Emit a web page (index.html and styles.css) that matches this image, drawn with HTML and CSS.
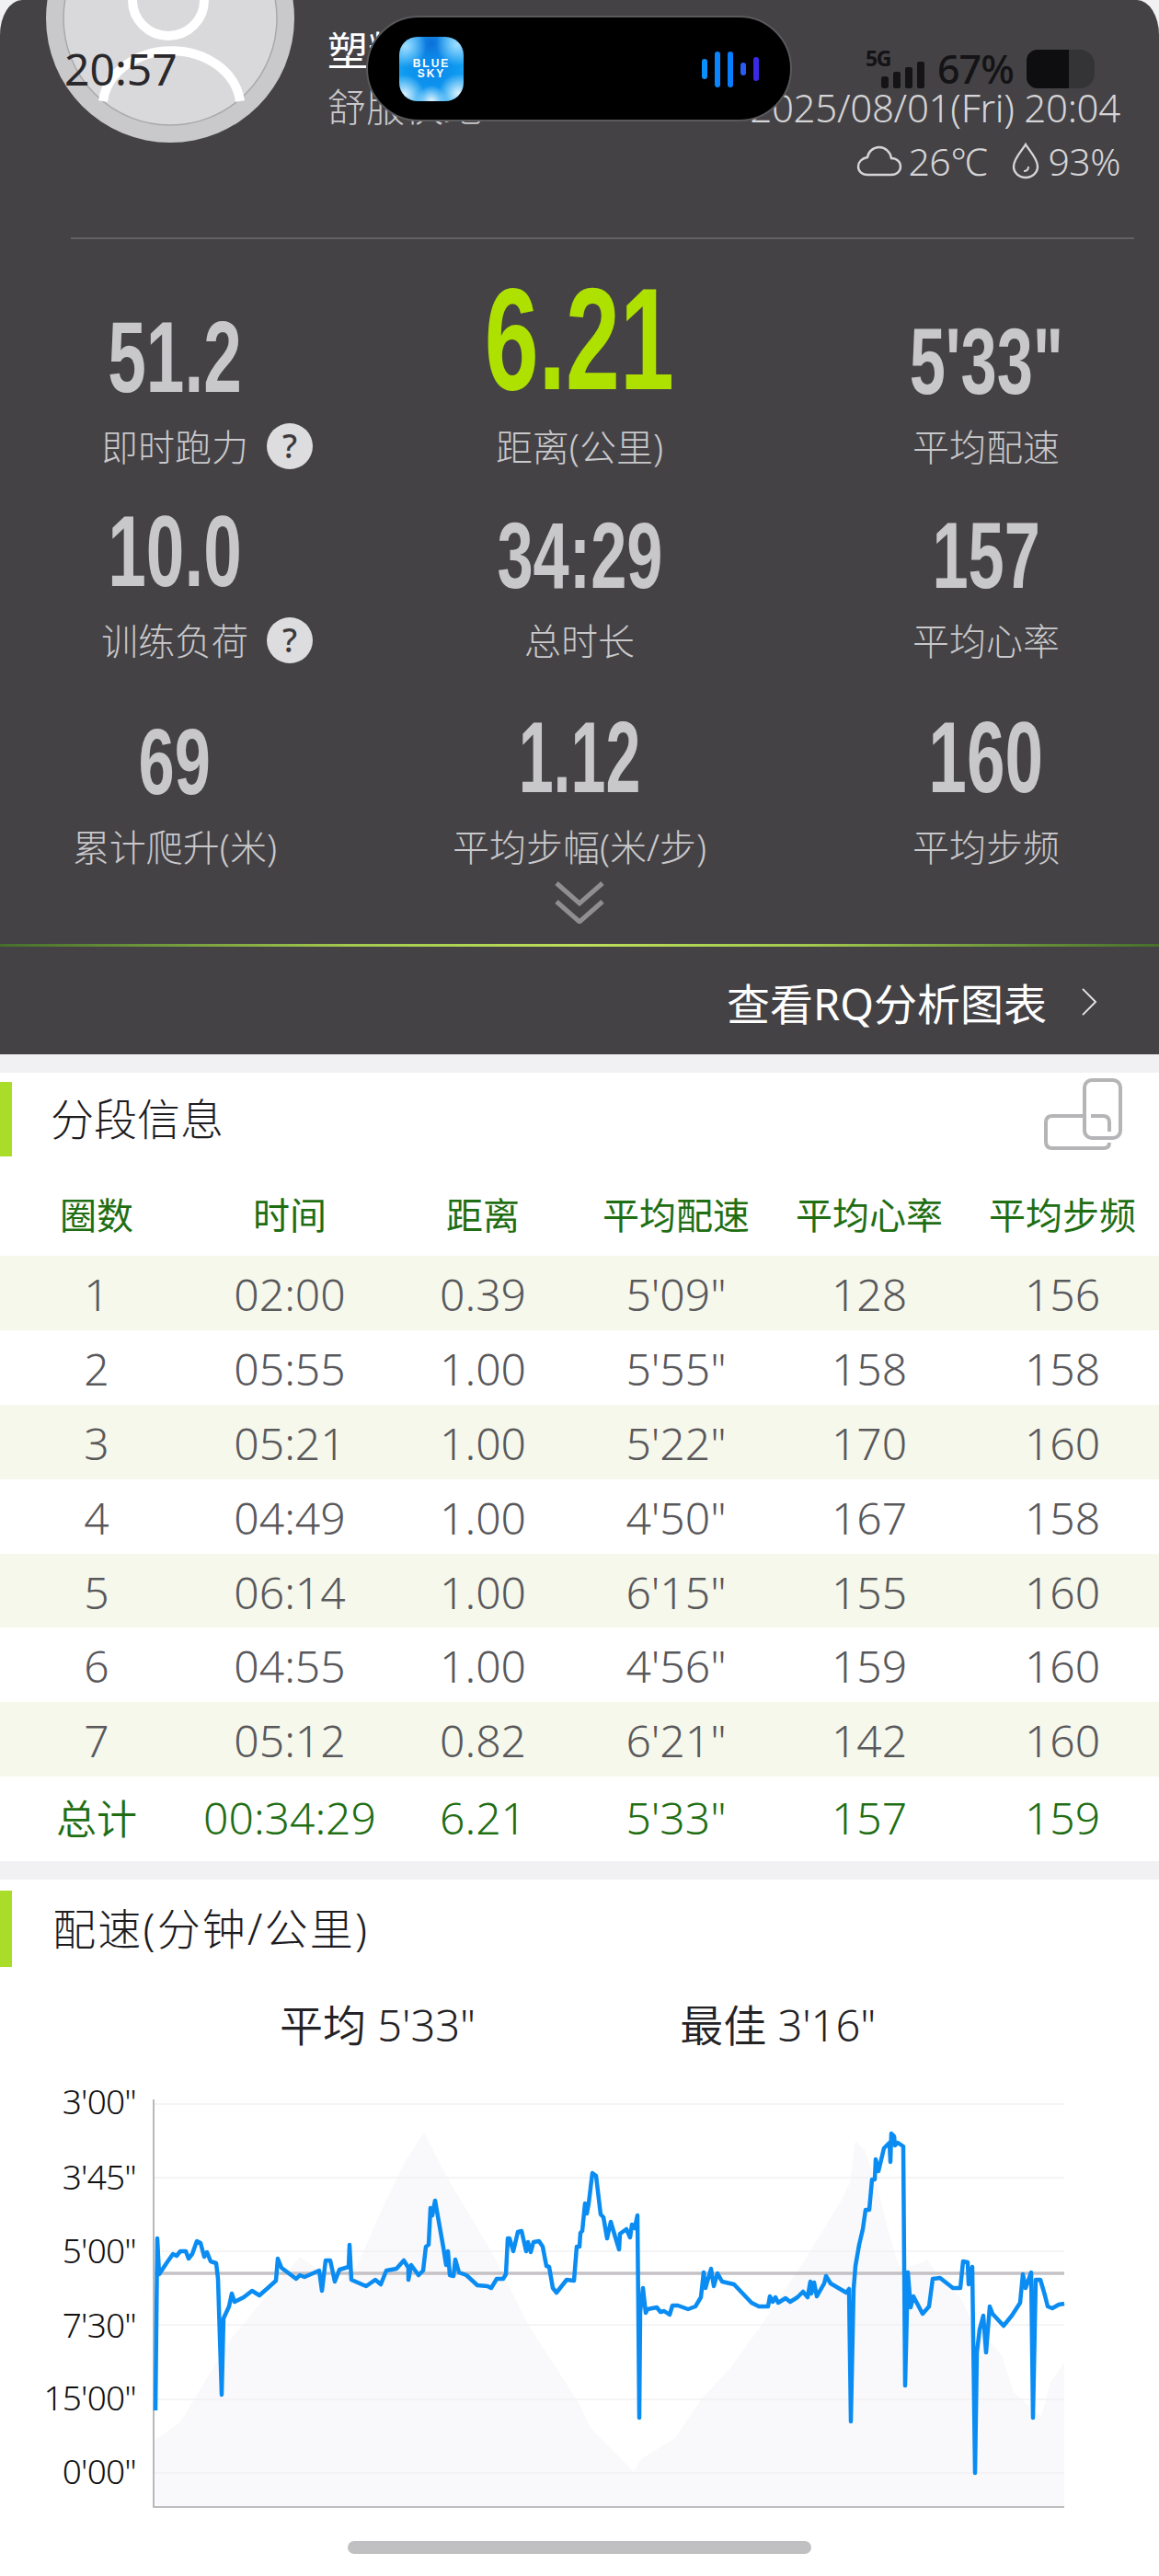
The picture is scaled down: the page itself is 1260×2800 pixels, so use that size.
FILE: index.html
```html
<!DOCTYPE html>
<html lang="zh">
<head>
<meta charset="utf-8">
<title>跑步详情</title>
<link rel="stylesheet" href="styles.css">
</head>
<body>
<div class="screen">
  <header class="panel">
    <div class="top">
      <svg class="avatar" viewBox="0 0 270 270">
        <circle cx="135" cy="135" r="135" fill="#c9c8cb"/>
        <circle cx="135" cy="135" r="116" fill="#d9d8db" stroke="#a9a8ab" stroke-width="1.5"/>
        <circle cx="133" cy="115" r="39" fill="none" stroke="#fff" stroke-width="10"/>
        <path d="M62 225 A75 62 0 0 1 211 225" fill="none" stroke="#fff" stroke-width="10"/>
      </svg>
      <div class="who">
        <div class="name">塑料</div>
        <div class="tag">舒服快跑</div>
      </div>
      <div class="when">
        <div class="date">2025/08/01(Fri) 20:04</div>
        <div class="weather">
          <svg class="ico-cloud" viewBox="0 0 50 34"><path d="M12 32 H38 C44 32 48 28 48 23 C48 18 44 14 38 14 C37 7 31 2 25 2 C18 2 13 7 12 13 C6 14 2 18 2 23 C2 28 6 32 12 32 Z" fill="none" stroke="#d5d4d6" stroke-width="2.4"/></svg>
          <span class="temp">26℃</span>
          <svg class="ico-drop" viewBox="0 0 30 40"><path d="M15 2 C11 9 2 17 2 26 C2 33 8 38 15 38 C22 38 28 33 28 26 C28 17 19 9 15 2 Z" fill="none" stroke="#d5d4d6" stroke-width="2.4"/><path d="M13 31 C16 31 18 29 18 26" fill="none" stroke="#d5d4d6" stroke-width="2"/></svg>
          <span class="hum">93%</span>
        </div>
      </div>
    </div>
    <div class="rule"></div>
    <div class="stats">
      <div class="cell"><div class="val"><span>51.2</span></div><div class="lab">即时跑力<span class="help">?</span></div></div>
      <div class="cell"><div class="val big"><span>6.21</span></div><div class="lab">距离(公里)</div></div>
      <div class="cell"><div class="val small"><span>5'33"</span></div><div class="lab">平均配速</div></div>
      <div class="cell"><div class="val"><span>10.0</span></div><div class="lab">训练负荷<span class="help">?</span></div></div>
      <div class="cell"><div class="val small"><span>34:29</span></div><div class="lab">总时长</div></div>
      <div class="cell"><div class="val small"><span>157</span></div><div class="lab">平均心率</div></div>
      <div class="cell"><div class="val small"><span>69</span></div><div class="lab">累计爬升(米)</div></div>
      <div class="cell"><div class="val narrow"><span>1.12</span></div><div class="lab">平均步幅(米/步)</div></div>
      <div class="cell"><div class="val"><span>160</span></div><div class="lab">平均步频</div></div>
    </div>
    <svg class="more" viewBox="0 0 54 46"><path d="M2 2 L27 24 L52 2 M2 22 L27 44 L52 22" fill="none" stroke="#8f8e91" stroke-width="5"/></svg>
    <div class="glow"></div>
    <div class="link">
      <span>查看RQ分析图表</span>
      <svg class="chev" viewBox="0 0 18 32"><path d="M1 1 L16 16 L1 31" fill="none" stroke="#e6e5e8" stroke-width="2"/></svg>
    </div>
  </header>

  <section class="card">
    <div class="head">
      <i class="bar"></i>
      <h2 class="title">分段信息</h2>
      <svg class="rotate" viewBox="0 0 86 80">
        <rect x="44" y="2" width="39" height="63" rx="8" fill="none" stroke="#b5b4b7" stroke-width="4"/>
        <path d="M42 41 H9 Q2 41 2 48 V69 Q2 76 9 76 H65 Q71 76 71 70 M51 41 H64 Q71 41 71 48 V58" fill="none" stroke="#b5b4b7" stroke-width="4"/>
      </svg>
    </div>
    <div class="thead"><span>圈数</span><span>时间</span><span>距离</span><span>平均配速</span><span>平均心率</span><span>平均步频</span></div>
    <div class="tr"><span>1</span><span>02:00</span><span>0.39</span><span>5'09"</span><span>128</span><span>156</span></div>
    <div class="tr"><span>2</span><span>05:55</span><span>1.00</span><span>5'55"</span><span>158</span><span>158</span></div>
    <div class="tr"><span>3</span><span>05:21</span><span>1.00</span><span>5'22"</span><span>170</span><span>160</span></div>
    <div class="tr"><span>4</span><span>04:49</span><span>1.00</span><span>4'50"</span><span>167</span><span>158</span></div>
    <div class="tr"><span>5</span><span>06:14</span><span>1.00</span><span>6'15"</span><span>155</span><span>160</span></div>
    <div class="tr"><span>6</span><span>04:55</span><span>1.00</span><span>4'56"</span><span>159</span><span>160</span></div>
    <div class="tr"><span>7</span><span>05:12</span><span>0.82</span><span>6'21"</span><span>142</span><span>160</span></div>
    <div class="tfoot"><span class="total">总计</span><span>00:34:29</span><span>6.21</span><span>5'33"</span><span>157</span><span>159</span></div>
  </section>

  <section class="card pace">
    <div class="head">
      <i class="bar"></i>
      <h2 class="title">配速(分钟/公里)</h2>
    </div>
    <div class="summary"><span>平均 5'33"</span><span>最佳 3'16"</span></div>
    <svg class="chart" viewBox="0 2258 1260 480">
      <polygon class="area" points="167,2725 167,2653 196,2633 228,2580 253,2540 286,2500 326,2453 350,2470 368,2482 388,2463 416,2400 440,2350 461,2318 488,2370 534,2447 557,2493 576,2530 630,2613 641,2638 689,2687 697,2673 734,2650 763,2607 795,2573 828,2527 874,2458 914,2393 924,2373 930,2327 940,2337 955,2380 961,2407 971,2443 979,2467 1000,2460 1008,2456 1018,2470 1044,2497 1057,2523 1089,2560 1102,2600 1132,2627 1142,2590 1157,2568 1157,2725"/>
      <g class="grid">
        <line x1="167" x2="1157" y1="2287" y2="2287"/>
        <line x1="167" x2="1157" y1="2367" y2="2367"/>
        <line x1="167" x2="1157" y1="2447" y2="2447"/>
        <line x1="167" x2="1157" y1="2527" y2="2527"/>
        <line x1="167" x2="1157" y1="2608" y2="2608"/>
        <line x1="167" x2="1157" y1="2688" y2="2688"/>
      </g>
      <path class="axis" d="M167 2282 V2725 H1157"/>
      <line class="avg" x1="167" x2="1157" y1="2471" y2="2471"/>
      <polyline class="pace-line" points="169,2620 171,2433 173,2472 181,2460 188,2450 192,2452 196,2447 202,2447 205,2455 209,2450 214,2436 218,2438 222,2453 225,2448 229,2458 235,2460 237,2477 241,2603 243,2520 249,2507 252,2493 255,2502 265,2497 274,2490 282,2495 290,2488 300,2479 302,2455 306,2465 322,2477 326,2473 331,2475 347,2468 350,2490 354,2457 359,2457 364,2480 369,2467 379,2464 380,2440 382,2478 398,2485 408,2478 414,2483 420,2468 431,2466 439,2457 444,2465 444,2478 447,2462 455,2473 460,2468 463,2442 466,2440 468,2400 470,2408 473,2392 482,2443 485,2462 487,2447 489,2473 493,2474 495,2456 499,2470 507,2473 519,2484 530,2485 534,2487 540,2477 547,2477 550,2472 552,2433 554,2433 558,2447 563,2426 567,2425 572,2447 574,2437 577,2448 580,2437 586,2436 590,2442 594,2463 597,2464 601,2487 605,2492 616,2478 624,2479 627,2442 630,2442 631,2427 633,2425 636,2395 638,2406 640,2395 644,2362 648,2365 653,2407 656,2410 660,2433 664,2415 669,2432 673,2445 674,2428 681,2423 685,2432 687,2418 690,2422 693,2408 695,2628 696,2513 699,2487 702,2514 704,2510 714,2508 718,2513 722,2512 728,2516 731,2506 737,2506 748,2510 756,2507 762,2497 765,2470 767,2487 773,2466 776,2485 780,2471 785,2480 798,2483 817,2503 825,2507 835,2507 837,2496 840,2502 843,2497 846,2503 854,2498 859,2502 867,2497 873,2491 878,2497 881,2480 882,2493 885,2481 888,2496 896,2482 898,2474 903,2482 920,2492 923,2488 925,2632 928,2488 930,2463 934,2440 938,2423 941,2402 945,2402 948,2369 951,2369 952,2347 955,2360 961,2335 967,2329 968,2350 969,2319 972,2322 973,2332 976,2329 982,2333 984,2593 987,2470 990,2508 993,2496 1003,2515 1010,2507 1014,2477 1022,2476 1036,2487 1044,2487 1047,2458 1052,2459 1053,2483 1057,2464 1060,2688 1062,2557 1065,2532 1069,2517 1072,2557 1076,2507 1079,2515 1091,2528 1100,2517 1109,2503 1112,2472 1115,2487 1121,2470 1123,2628 1126,2478 1131,2478 1136,2495 1139,2507 1144,2509 1151,2505 1157,2504"/>
      <g class="ylab">
        <text x="148" y="2298">3'00"</text>
        <text x="148" y="2380">3'45"</text>
        <text x="148" y="2460">5'00"</text>
        <text x="148" y="2541">7'30"</text>
        <text x="148" y="2620">15'00"</text>
        <text x="148" y="2700">0'00"</text>
      </g>
    </svg>
    <div class="home"></div>
  </section>

  <div class="clock">20:57</div>
  <div class="island">
    <div class="album"><b>BLUE</b><b>SKY</b></div>
    <div class="wave"><i class="w1"></i><i class="w2"></i><i class="w3"></i><i class="w4"></i><i class="w5"></i></div>
  </div>
  <div class="status">
    <span class="net">5G</span>
    <svg class="signal" viewBox="0 0 47 29"><rect x="0" y="16" width="8" height="13" rx="3"/><rect x="13" y="11" width="8" height="18" rx="2"/><rect x="26" y="6" width="8" height="23" rx="2"/><rect x="39" y="0" width="8" height="29" rx="2"/></svg>
    <span class="pct">67%</span>
    <div class="batt"><div class="fill"></div></div>
  </div>
</div>
</body>
</html>
```
FILE: styles.css
```css
* { box-sizing: border-box; }
html, body { margin: 0; padding: 0; background: #fff; }
body {
  width: 1260px;
  height: 2800px;
  overflow: hidden;
  font-family: "Noto Sans", "Noto Sans CJK SC", sans-serif;
}
.screen { position: relative; width: 1260px; height: 2800px; background: #f1f0f3; overflow: hidden; }

/* dark panel */
.panel {
  height: 1146px;
  background: #444245;
  overflow: hidden;
  border-radius: 24px 24px 0 0 / 38px 38px 0 0;
}
.top { display: flex; height: 258px; padding-left: 50px; padding-right: 42px; }
.avatar { width: 270px; height: 270px; margin-top: -115px; flex: none; }
.who { margin-left: 36px; padding-top: 24px; }
.name { font-size: 44px; line-height: 62px; color: #fff; }
.tag { font-size: 42px; line-height: 60px; color: #c9c8cb; font-weight: 300; }
.when { margin-left: auto; padding-top: 87px; text-align: right; color: #d5d4d6; }
.date { font-size: 42px; line-height: 60px; letter-spacing: -0.3px; white-space: nowrap; font-weight: 300; }
.weather { display: flex; justify-content: flex-end; align-items: center; font-size: 41px; line-height: 56px; font-weight: 300; letter-spacing: -0.5px; }
.ico-cloud { width: 50px; height: 34px; margin-right: 6px; }
.ico-drop { width: 30px; height: 40px; margin-left: 27px; margin-right: 9px; }

.rule { height: 2px; margin: 0 27px 0 77px; background: #626164; }

.stats {
  display: grid;
  grid-template-columns: 380px 500px 384px;
  grid-template-rows: 196px 211px 224px;
  align-items: end;
  padding-top: 63px;
  height: 694px;
}
.cell { display: flex; flex-direction: column; align-items: center; }
.val {
  height: 130px;
  line-height: 130px;
  font-family: "Liberation Sans", sans-serif;
  font-weight: 700;
  font-size: 110px;
  color: #c8c7ca;
  white-space: nowrap;
}
.val span { display: inline-block; transform: scaleX(.68); }
.val.small { font-size: 102px; height: 120px; line-height: 140px; margin-bottom: 10px; }
.val.small span { transform: scaleX(.69); }
.val.narrow { height: 130px; line-height: 130px; margin-bottom: 0; }
.val.narrow span { transform: scaleX(.62); }
.val.big { font-size: 158px; height: 90px; line-height: 90px; margin-bottom: 40px; color: #aee000; }
.val.big span { transform: scaleX(.67); }
.lab {
  position: relative;
  height: 66px;
  line-height: 66px;
  font-size: 40px;
  font-weight: 300;
  color: #c9c8cb;
  white-space: nowrap;
}
.help {
  position: absolute;
  left: calc(100% + 20px);
  top: 7px;
  width: 50px;
  height: 50px;
  border-radius: 50%;
  background: #dddcdf;
  color: #3c3a3d;
  font-size: 36px;
  font-weight: 500;
  line-height: 50px;
  text-align: center;
}
.more { display: block; width: 54px; height: 46px; margin: 4px auto 0; }
.glow {
  height: 3px;
  margin-top: 22px;
  background: linear-gradient(90deg, #466f2c 0%, #a3c94e 30%, #bde05a 50%, #a3c94e 70%, #466f2c 100%);
}
.link {
  display: flex;
  justify-content: flex-end;
  align-items: center;
  gap: 38px;
  height: 117px;
  padding: 2px 67px 0 0;
  color: #fff;
  font-size: 47px;
}
.chev { width: 17px; height: 30px; }

/* white cards */
.card { background: #fff; margin-top: 20px; }
.head { position: relative; display: flex; align-items: center; padding-top: 10px; }
.bar { display: block; width: 13px; height: 81px; background: #aadc2a; flex: none; }
.title { margin: 0 0 0 42px; font-size: 47px; font-weight: 300; color: #1d1c1f; line-height: 81px; }
.rotate { position: absolute; left: 1135px; top: 6px; width: 86px; height: 80px; }

.thead, .tr, .tfoot { display: grid; grid-template-columns: repeat(6, 210px); text-align: center; align-items: center; }
.thead { height: 108px; padding-top: 16px; font-size: 40px; font-weight: 400; color: #1f6e13; }
.tr { height: 80.9px; padding-top: 2px; font-size: 48px; font-weight: 350; color: #59585b; }
.tr:nth-child(odd) { background: #f6f8ec; }
.tfoot { height: 92px; padding-bottom: 4px; font-size: 48px; color: #1f6e13; font-weight: 350; }
.total { font-size: 44px; }

.pace .head { padding-top: 12px; }
.pace .bar { height: 83px; }
.pace .title { margin-left: 44px; letter-spacing: 2.2px; }
.summary { display: flex; gap: 222px; height: 120px; align-items: center; padding-left: 304px; font-size: 47px; font-weight: 350; color: #232225; }
.chart { display: block; width: 1260px; height: 480px; }
.area { fill: #f9f8fa; }
.grid line { stroke: #f2f1f3; stroke-width: 1.5; }
.axis { fill: none; stroke: #a9a8ab; stroke-width: 1.6; }
.avg { stroke: #c4c2c6; stroke-width: 3.5; }
.pace-line { fill: none; stroke: #0a8cf2; stroke-width: 4.5; stroke-linejoin: round; }
.ylab text { font-size: 37px; font-weight: 350; fill: #111; text-anchor: end; letter-spacing: -0.8px; }
.home { width: 504px; height: 14px; margin: 24px auto 0; border-radius: 7px; background: #c0bfc2; }
.pace { height: 757px; }

/* system overlays */
.clock {
  position: absolute;
  left: 70px;
  top: 46px;
  font-size: 48px;
  line-height: 58px;
  color: #29282b;
}
.island {
  position: absolute;
  left: 398px;
  top: 17px;
  width: 463px;
  height: 115px;
  border-radius: 58px;
  background: #000;
  border: 2px solid #59585b;
}
.album {
  position: absolute;
  left: 34px;
  top: 21px;
  width: 70px;
  height: 70px;
  border-radius: 20px;
  background:
    radial-gradient(circle at 50% 100%, #e4f6ff 0, rgba(228,246,255,0) 22%),
    radial-gradient(circle at 8% 90%, #d8f2ff 0, rgba(216,242,255,0) 24%),
    radial-gradient(circle at 92% 88%, #d8f2ff 0, rgba(216,242,255,0) 24%),
    radial-gradient(circle at 10% 15%, #9fdcff 0, rgba(159,220,255,0) 26%),
    radial-gradient(circle at 90% 12%, #9fdcff 0, rgba(159,220,255,0) 26%),
    radial-gradient(circle at 50% 10%, #0d6fd8 0, rgba(13,111,216,0) 30%),
    radial-gradient(circle at 50% 50%, #0a86ea 0, #0f9af0 60%, #35b2f5 100%);
  display: flex;
  flex-direction: column;
  align-items: center;
  justify-content: center;
  color: #fff;
  font-family: "Liberation Sans", sans-serif;
  font-size: 12px;
  line-height: 11px;
  letter-spacing: 2px;
}
.wave { position: absolute; left: 363px; top: 36px; display: flex; align-items: center; gap: 8px; height: 40px; }
.wave i { display: block; width: 6px; border-radius: 3px; }
.w1 { height: 22px; background: #0a90fa; }
.w2 { height: 39px; background: #0a84ff; }
.w3 { height: 39px; background: #0a7cff; }
.w4 { height: 14px; background: #2a5cf0; }
.w5 { height: 26px; background: #3a2ae8; }

.status { position: absolute; left: 941px; top: 54px; width: 251px; height: 42px; color: #141316; }
.net { position: absolute; left: 0; top: -3px; font-size: 23px; line-height: 24px; font-weight: 700; letter-spacing: -1.5px; }
.signal { position: absolute; left: 17px; top: 13px; width: 47px; height: 29px; fill: #141316; }
.pct { position: absolute; left: 78px; top: -5px; font-size: 43px; line-height: 52px; font-weight: 500; letter-spacing: -1px; }
.batt { position: absolute; left: 175px; top: 0; width: 74px; height: 42px; border-radius: 12px 16px 16px 12px; background: #343336; overflow: hidden; }
.fill { width: 46px; height: 42px; background: #0e0d10; }
```
